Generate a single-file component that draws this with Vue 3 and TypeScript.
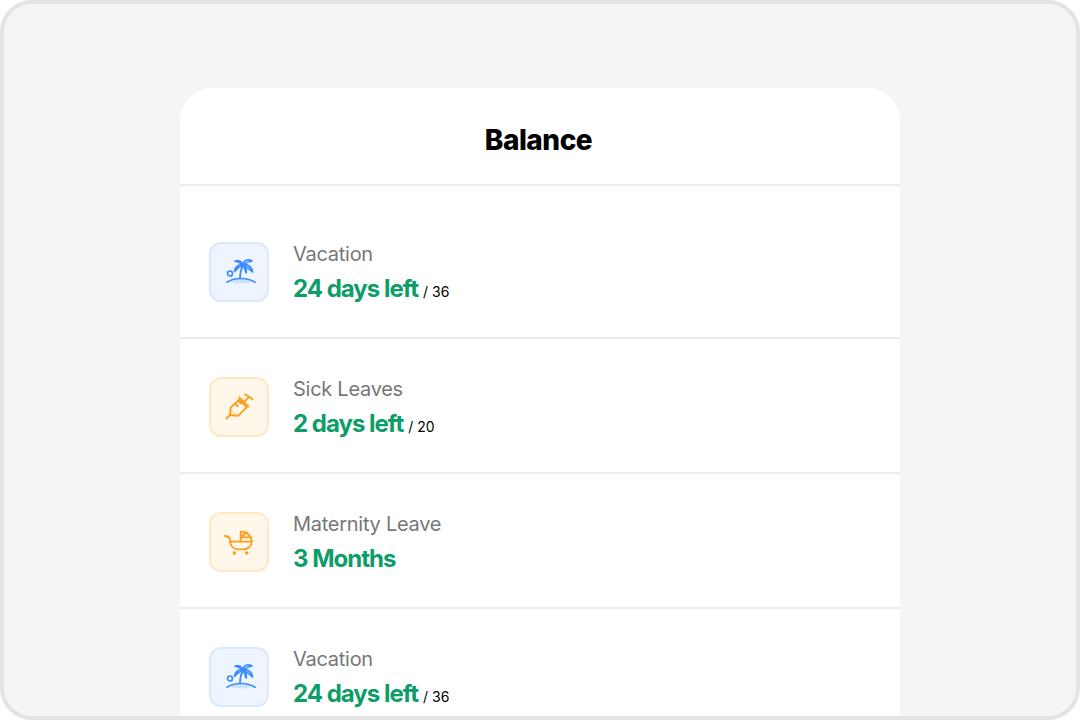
<template>
  <div class="frame">
    <div class="card">
      <h1 class="title">Balance</h1>
      <ul class="list">
        <li v-for="(item, index) in items" :key="index" class="row">
          <div class="badge" :class="item.tone">
            <svg v-if="item.icon === 'palm'" width="36" height="36" viewBox="0 0 36 36" fill="none" stroke="currentColor" stroke-width="1.7" stroke-linecap="round" stroke-linejoin="round">
              <path d="M9 28C13 26.200 16 25.500 20 25.500s8 .8 11 2.500c-7 1.600-15 1.600-22 0z" fill="currentColor" fill-opacity=".2" stroke="none" />
              <path d="M6 28.200c4-2.700 9-3.700 14-3.700s10 1 14 3.700" />
              <circle cx="9" cy="19.500" r="2.500" />
              <path d="M19 24.500c0-5 1-9.500 3-13.500" />
              <path d="M22 11c-1-3.500-4.500-5.500-8-3.800 3 .3 5.500 1.800 8 3.800z" />
              <path d="M22 11c-4-1-8 1.500-8.500 6.500 2.500-3 5-5.200 8.500-6.500z" />
              <path d="M22 11c.2-4.200 4.500-6.500 9-4-3.500.6-6.300 2-9 4z" />
              <path d="M22 11c4-1.200 9 1.500 9.500 7-3-3.400-5.800-5.500-9.500-7z" />
              <path d="M22 11c2.600 1.800 4 4.500 3.200 8-1-3-2-5.500-3.200-8z" />
            </svg>
            <svg v-else-if="item.icon === 'syringe'" width="36" height="36" viewBox="0 0 36 36" fill="none" stroke="currentColor" stroke-width="1.8" stroke-linecap="round" stroke-linejoin="round">
              <path d="M9.700 18.700L17 26l-8 1z" fill="currentColor" fill-opacity=".2" stroke="none" />
              <path d="M5.500 29.500L9 26" />
              <path d="M9 26l.7-7.300 8.600-8.400 7.400 8-8.700 8.500z" />
              <path d="M14.500 15l2.300 2.300M18 12.500l2 2" />
              <path d="M22 14l6.300-6.300" />
              <path d="M24 5.300l7.700 5M18.300 8.300l9 9.300" />
            </svg>
            <svg v-else width="36" height="36" viewBox="0 0 36 36" fill="none" stroke="currentColor" stroke-width="1.8" stroke-linecap="round" stroke-linejoin="round">
              <path d="M19.700 13.300l6-5c2.300 1.200 4 3 4.300 5z" fill="currentColor" fill-opacity=".2" stroke="none" />
              <path d="M4 12c2.500.2 4 .8 4.800 2.700L10 18" />
              <path d="M9 17.700h21.700c0 4.800-3.700 7.600-8.400 7.600H17c-4.200 0-7.400-3.200-8-7.600z" />
              <path d="M19.700 17.700v-10c5-1 11 3.500 11 10" />
              <path d="M19.700 13.300l6-5M19.700 13.300H30" />
              <circle cx="13.300" cy="29" r="1.800" fill="currentColor" stroke="none" />
              <circle cx="25.700" cy="29" r="1.800" fill="currentColor" stroke="none" />
            </svg>
          </div>
          <div class="info">
            <div class="label">{{ item.label }}</div>
            <div class="value">
              <span class="amount">{{ item.amount }}</span>
              <span v-if="item.total" class="total">/ {{ item.total }}</span>
            </div>
          </div>
        </li>
      </ul>
    </div>
  </div>
</template>

<script setup lang="ts">
interface BalanceItem {
  label: string
  amount: string
  total?: number
  tone: 'blue' | 'orange'
  icon: 'palm' | 'syringe' | 'stroller'
}

const items: BalanceItem[] = [
  { label: 'Vacation', amount: '24 days left', total: 36, tone: 'blue', icon: 'palm' },
  { label: 'Sick Leaves', amount: '2 days left', total: 20, tone: 'orange', icon: 'syringe' },
  { label: 'Maternity Leave', amount: '3 Months', tone: 'orange', icon: 'stroller' },
  { label: 'Vacation', amount: '24 days left', total: 36, tone: 'blue', icon: 'palm' }
]
</script>

<style>
html,
body {
  margin: 0;
  background: #ffffff;
}
</style>

<style scoped>
.frame {
  box-sizing: border-box;
  width: 1080px;
  height: 720px;
  padding-top: 84px;
  overflow: hidden;
  border: 4px solid #e4e4e4;
  border-radius: 32px;
  background: #f5f5f5;
  font-family: Inter, "Liberation Sans", sans-serif;
}

.card {
  width: 720px;
  height: 640px;
  margin: 0 auto;
  border-radius: 32px 32px 0 0;
  background: #ffffff;
}

.title {
  box-sizing: border-box;
  height: 98px;
  margin: 0;
  padding: 33px 3px 0 0;
  border-bottom: 2px solid #ececec;
  color: #000000;
  font-size: 28px;
  font-weight: 800;
  line-height: 38px;
  letter-spacing: -0.5px;
  text-align: center;
}

.list {
  margin: 0;
  padding: 18px 0 0;
  list-style: none;
}

.row {
  box-sizing: border-box;
  display: flex;
  align-items: center;
  gap: 24px;
  height: 135px;
  padding: 2px 29px 0;
  border-bottom: 2px solid #ececec;
}

.badge {
  box-sizing: border-box;
  display: flex;
  align-items: center;
  justify-content: center;
  width: 60px;
  height: 60px;
  border: 2px solid;
  border-radius: 12px;
}

.blue {
  border-color: #dbe9ff;
  background: #eef5ff;
  color: #3b8cff;
}

.orange {
  border-color: #ffe9c4;
  background: #fff7e9;
  color: #ff9c1a;
}

.info {
  margin-top: 5px;
}

.label {
  color: #777777;
  font-size: 20px;
  line-height: 28px;
  letter-spacing: -0.27px;
}

.value {
  margin-top: 4px;
  line-height: 34px;
}

.amount {
  color: #0c9d69;
  font-size: 24px;
  font-weight: 750;
  letter-spacing: -1px;
}

.total {
  margin-left: 5px;
  color: #000000;
  font-size: 14px;
}
</style>
